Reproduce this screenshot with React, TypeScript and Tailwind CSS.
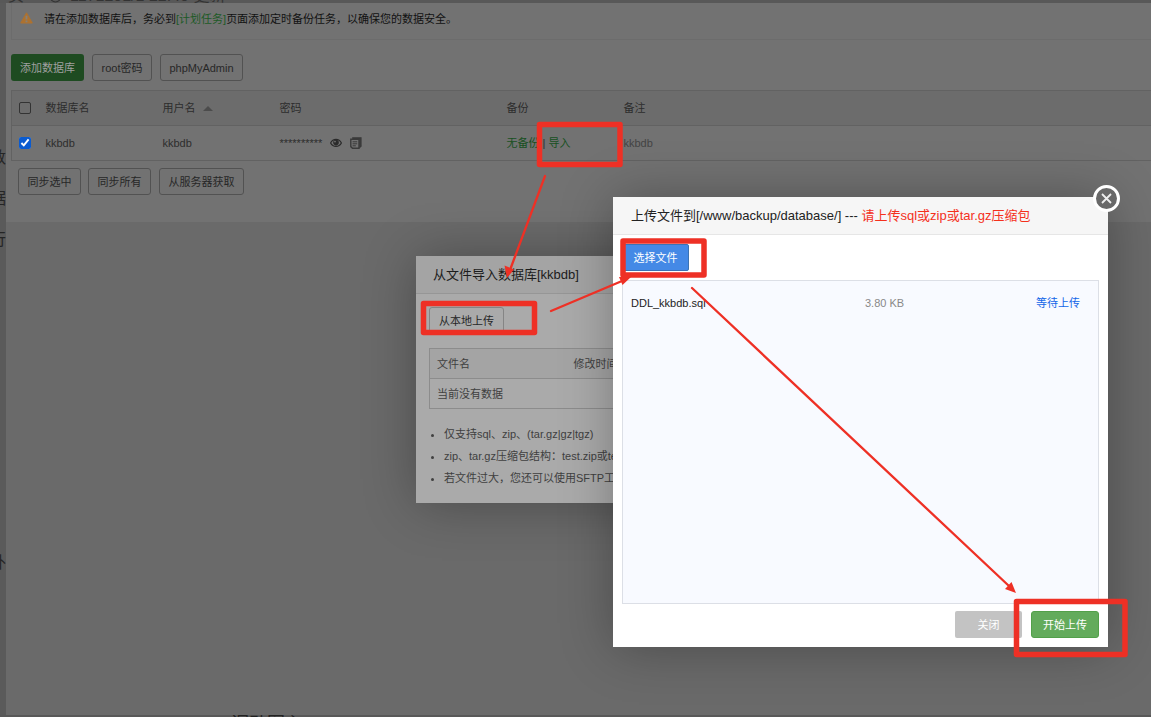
import { CircleAlert } from "lucide-react";

const font = "font-['Liberation_Sans','Noto_Sans_CJK_SC',sans-serif]";

const greyButton =
  "h-[27px] rounded-[3px] border border-[#525252] text-[#272727] whitespace-nowrap";

function WarningIcon() {
  return (
    <svg width="13" height="12" viewBox="0 0 13 12" className="mt-px shrink-0">
      <path d="M6.5 0.8 L12.3 11 H0.7 Z" fill="#ad7230" stroke="#ad7230" strokeLinejoin="round" />
      <path d="M6.5 3.8 V7.4 M6.5 8.6 V10.2" stroke="#858079" strokeWidth="1.8" />
    </svg>
  );
}

function EyeIcon() {
  return (
    <svg width="12" height="10" viewBox="0 0 12 10">
      <path d="M0.6 5 C3 0.2 9 0.2 11.4 5 C9 9.6 3 9.6 0.6 5 Z" fill="none" stroke="#2b2b2b" strokeWidth="1.2" />
      <circle cx="6" cy="4.6" r="2.8" fill="#2b2b2b" />
      <circle cx="5" cy="3.6" r="0.9" fill="#727272" />
    </svg>
  );
}

function CopyIcon() {
  return (
    <svg width="12" height="12" viewBox="0 0 12 12" fill="none" stroke="#3a3a3a">
      <path d="M2.5 0.5 H11.3 V9.5 L9.5 11 V2.2 H2.5 Z" fill="#3a3a3a" strokeWidth="0.6" />
      <path d="M0.8 2.2 H9 V11.3 H2.5 L0.8 9.6 Z" strokeWidth="1.4" />
      <path d="M2.6 4.8 H7.2 M2.6 6.8 H7.2 M2.6 8.8 H5.8" />
    </svg>
  );
}

function Databases() {
  return (
    <section className="flex flex-col bg-[#727272] pb-[27px] pl-[5px]">
      {/* Notice */}
      <div className="flex h-[37px] items-start gap-[11px] border-b border-l border-[#6c6c6c] pl-2 pt-2 leading-4 text-[#111111]">
        <WarningIcon />
        <p>
          请在添加数据库后，务必到
          <a href="#cron" className="text-[#1d5a26]">[计划任务]</a>
          页面添加定时备份任务，以确保您的数据安全。
        </p>
      </div>

      {/* Toolbar */}
      <div className="mt-[14px] flex gap-2">
        <button className="h-[27px] w-[73px] rounded-[3px] bg-[#1e4b21] text-[#a0a0a0]">添加数据库</button>
        <button className={`${greyButton} w-[60px]`}>root密码</button>
        <button className={`${greyButton} w-[83px]`}>phpMyAdmin</button>
      </div>

      {/* Database list */}
      <table className="mt-[9px] w-full table-fixed border-collapse border border-r-0 border-[#626262] text-left text-[#2d2d2d]">
        <colgroup>
          <col className="w-[27px]" />
          <col className="w-[117px]" />
          <col className="w-[117px]" />
          <col className="w-[227px]" />
          <col className="w-[117px]" />
          <col />
        </colgroup>
        <thead>
          <tr className="h-[35px] border-b border-[#626262] bg-[#6c6c6c]">
            <th className="pl-[7px]">
              <input type="checkbox" aria-label="全选" className="block size-3 appearance-none rounded-xs border border-[#333333]" />
            </th>
            <th className="px-[7px] font-normal">数据库名</th>
            <th className="px-[7px] font-normal">
              <span className="flex items-center gap-[7px]">
                用户名
                <span className="border-x-[5px] border-b-[5px] border-x-transparent border-b-[#4c4c4c]" />
              </span>
            </th>
            <th className="px-[7px] font-normal">密码</th>
            <th className="px-[7px] font-normal">备份</th>
            <th className="px-[7px] font-normal">备注</th>
          </tr>
        </thead>
        <tbody>
          <tr className="h-[35px]">
            <td className="pl-[7px]">
              <input type="checkbox" defaultChecked aria-label="kkbdb" className="block size-3 accent-[#0a5bd0]" />
            </td>
            <td className="px-[7px]">kkbdb</td>
            <td className="px-[7px]">kkbdb</td>
            <td className="px-[7px]">
              <div className="flex items-center">
                <span className="w-[50px]">**********</span>
                <button aria-label="显示密码"><EyeIcon /></button>
                <button aria-label="复制密码" className="ml-2"><CopyIcon /></button>
              </div>
            </td>
            <td className="px-[7px] whitespace-nowrap">
              <a href="#backup" className="text-[#17501f]">无备份</a>
              {" | "}
              <a href="#import" className="text-[#17501f]">导入</a>
            </td>
            <td className="px-[7px] text-[#444444]">kkbdb</td>
          </tr>
        </tbody>
      </table>

      <div className="mt-[7px] flex gap-[7px] pl-[7px]">
        <button className={`${greyButton} w-[63px]`}>同步选中</button>
        <button className={`${greyButton} w-[63px]`}>同步所有</button>
        <button className={`${greyButton} ml-px w-[85px]`}>从服务器获取</button>
      </div>
    </section>
  );
}

function ImportDialog() {
  return (
    <div role="dialog" aria-label="从文件导入数据库" className="absolute left-[416px] top-[256px] w-[540px] bg-[#aaaaaa] pb-[14px] text-[#404040] shadow-[1px_1px_50px_rgba(0,0,0,0.3)]">
      <h2 className="h-[38px] border-b border-[#969696] bg-[#a4a4a4] pl-[17px] text-[13px] leading-[38px] text-[#1c1c1c]">
        从文件导入数据库[kkbdb]
      </h2>
      <div className="px-[13px] pt-[13px]">
        <button className="h-[27px] rounded-[3px] border border-[#858585] px-[9px] text-[#272727]">从本地上传</button>
        <table className="mt-[14px] w-full table-fixed border-collapse border border-[#8c8c8c] text-left">
          <thead>
            <tr className="h-[30px] border-b border-[#8c8c8c] bg-[#a4a4a4]">
              <th className="w-[136px] px-[7px] font-normal">文件名</th>
              <th className="px-2 font-normal">修改时间</th>
            </tr>
          </thead>
          <tbody>
            <tr className="h-[30px]">
              <td colSpan={2} className="px-[7px]">当前没有数据</td>
            </tr>
          </tbody>
        </table>
        <ul className="mt-[14px] list-disc pl-[15px] leading-[22px]">
          <li>仅支持sql、zip、(tar.gz|gz|tgz)</li>
          <li>zip、tar.gz压缩包结构：test.zip或test.tar.gz</li>
          <li>若文件过大，您还可以使用SFTP工具</li>
        </ul>
      </div>
    </div>
  );
}

function UploadDialog() {
  return (
    <div role="dialog" aria-label="上传文件" className="absolute left-[613px] top-[197px] w-[495px] bg-white text-[#333333] shadow-[1px_1px_50px_rgba(0,0,0,0.3)]">
      <h2 className="h-[38px] border-b border-[#e6e6e6] bg-[#f6f6f6] pl-[18px] text-[13px] leading-[38px] whitespace-nowrap text-[#222222]">
        上传文件到[/www/backup/database/] --- <span className="text-[#f4301c]">请上传sql或zip或tar.gz压缩包</span>
      </h2>
      <button aria-label="关闭窗口" className="absolute -right-[12px] -top-[12px] flex size-[27px] items-center justify-center rounded-full border-[3px] border-white bg-[#686868]">
        <svg width="11" height="11" viewBox="0 0 11 11" stroke="#eeeeee" strokeWidth="1.8">
          <path d="M1 1 L10 10 M10 1 L1 10" />
        </svg>
      </button>
      <div className="p-[9px]">
        <button className="h-[27px] w-[67px] rounded-xs border border-[#3b73b4] bg-[#4489e6] text-white">选择文件</button>
        <ul className="mt-[9px] h-[324px] border border-[#dcdfe6] bg-[#f8faff]">
          <li className="flex h-[44px] items-center pl-2 pr-[18px]">
            <span className="w-[234px] text-[#222222]">DDL_kkbdb.sql</span>
            <span className="flex-1 text-[#888888]">3.80 KB</span>
            <span className="text-[#1266e8]">等待上传</span>
          </li>
        </ul>
        <div className="mt-[7px] flex justify-end gap-[9px]">
          <button className="h-[27px] w-[67px] rounded-xs bg-[#c3c3c3] text-white">关闭</button>
          <button className="h-[27px] w-[68px] rounded-[3px] border border-[#52a04a] bg-[#63ab5c] text-white">开始上传</button>
        </div>
      </div>
    </div>
  );
}

// Red boxes and arrows that show the order of the steps
function Steps() {
  return (
    <svg width="1151" height="717" viewBox="0 0 1151 717" className="pointer-events-none absolute left-0 top-0" fill="none" stroke="#ee3025">
      <g strokeWidth="5.5" strokeLinejoin="round">
        <rect x="539.5" y="124.5" width="80.500" height="40" />
        <rect x="423.5" y="303.5" width="111" height="29" />
        <rect x="623" y="241" width="81" height="34" />
        <rect x="1016.5" y="601.5" width="108.5" height="53" />
      </g>
      <g strokeWidth="2.3" strokeLinecap="round">
        <path d="M545 176 L510 270 M551 311 L622 281 M692 288 L1009 586" />
      </g>
      <g fill="#ee3025" stroke="none">
        <path d="M507 278 L504.5 265.5 L514 269.5 Z" />
        <path d="M631 277 L622.5 285 L619 277 Z" />
        <path d="M1016 593 L1005 589 L1011.5 582 Z" />
      </g>
    </svg>
  );
}

export default function App() {
  return (
    <div className={`${font} relative flex min-h-screen flex-col overflow-hidden bg-[#585858] text-[11px] leading-4`}>
      <div className="flex h-[3px] items-end overflow-hidden pl-2 text-[16px] leading-[14px] whitespace-nowrap text-[#333333]">
        <span>页</span>
        <CircleAlert size={13} className="ml-[25px] mr-2 shrink-0" />
        <span>1171201/1 22:40 更新</span>
      </div>

      <div className="flex flex-1">
        <div className="flex w-[6px] shrink-0 flex-col items-end overflow-hidden bg-[#5a5a5a] pt-[143px] text-[16px] leading-6 text-[#252525]">
          <span>数</span>
          <span className="mt-[17px]">据</span>
          <span className="mt-[17px]">行</span>
          <span className="mt-[299px]">外</span>
        </div>
        <main className="min-w-0 flex-1 bg-[#6a6a6a]">
          <Databases />
        </main>
      </div>

      <div className="h-[2px] overflow-hidden pl-[231px] text-[18px] leading-[18px] text-[#222222]">调动图心</div>

      <ImportDialog />
      <UploadDialog />
      <Steps />
    </div>
  );
}
